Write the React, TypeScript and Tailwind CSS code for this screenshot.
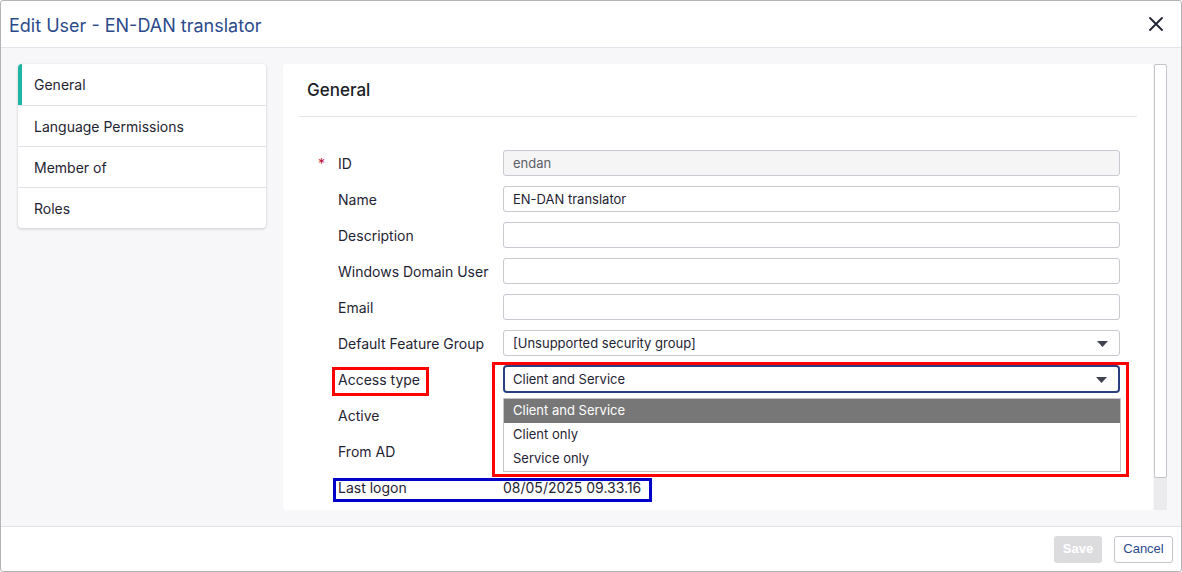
import React from "react";

const navItems = ["General", "Language Permissions", "Member of", "Roles"];

type Field = {
  label: string;
  required?: boolean;
  kind: "text" | "select" | "none" | "value";
  value?: string;
  disabled?: boolean;
  focused?: boolean;
};

const fields: Field[] = [
  { label: "ID", required: true, kind: "text", value: "endan", disabled: true },
  { label: "Name", kind: "text", value: "EN-DAN translator" },
  { label: "Description", kind: "text", value: "" },
  { label: "Windows Domain User", kind: "text", value: "" },
  { label: "Email", kind: "text", value: "" },
  { label: "Default Feature Group", kind: "select", value: "[Unsupported security group]" },
  { label: "Access type", kind: "select", value: "Client and Service", focused: true },
  { label: "Active", kind: "none" },
  { label: "From AD", kind: "none" },
  { label: "Last logon", kind: "value", value: "08/05/2025 09.33.16" },
];

function Caret() {
  return (
    <svg width="11" height="6" viewBox="0 0 11 6" className="shrink-0">
      <path d="M0 0 L11 0 L5.5 6 Z" fill="#3f4350" />
    </svg>
  );
}

function FieldInput({ f }: { f: Field }) {
  if (f.kind === "none") return null;
  if (f.kind === "value") {
    return <div className="text-[14px] text-[#1f2433]">{f.value}</div>;
  }
  if (f.kind === "select") {
    return (
      <div
        className={
          "w-[617px] flex items-center justify-between pt-[2px] pr-[11px] bg-white text-[13px] text-[#1f2433] " +
          (f.focused
            ? "h-[28px] border-2 border-[#2b3f80] pl-[8px] rounded-[4px]"
            : "h-[26px] border border-[#c9c9d1] pl-[9px] rounded-[3px]")
        }
      >
        <span>{f.value}</span>
        <Caret />
      </div>
    );
  }
  return (
    <div
      className={
        "w-[617px] h-[26px] flex items-center pt-[2px] pl-[9px] text-[13px] rounded-[3px] border border-[#c9c9d1] " +
        (f.disabled ? "bg-[#f5f5f6] text-[#5c5f66]" : "bg-white text-[#1f2433]")
      }
    >
      {f.value}
    </div>
  );
}

export default function App() {
  return (
    <div className="relative w-[1182px] h-[572px] bg-white border border-[#b3b3b8] rounded-[3px] flex flex-col font-['Inter',sans-serif] overflow-hidden">
      {/* header */}
      <div className="h-[47px] shrink-0 border-b border-[#e4e4ea] flex items-center justify-between pl-[8px] pr-[18px]">
        <h1 className="mt-[3px] text-[18px] text-[#2b4a8b] leading-none">Edit User - EN-DAN translator</h1>
        <svg width="14" height="14" viewBox="0 0 14 14">
          <path d="M1 1 L13 13 M13 1 L1 13" stroke="#1f2433" strokeWidth="1.8" strokeLinecap="round" />
        </svg>
      </div>

      {/* body */}
      <div className="h-[478px] shrink-0 bg-[#f7f7fa] flex pt-4 pl-[17px]">
        {/* side nav */}
        <div className="w-[248px] self-start bg-white rounded-[4px] shadow-[0_1px_3px_rgba(0,0,0,0.18)] overflow-hidden">
          {navItems.map((item, i) => (
            <div
              key={item}
              className={
                "h-[41px] flex items-center text-[14px] text-[#1f2433] " +
                (i > 0 ? "border-t border-[#e2e2e8] " : "") +
                (i === 0 ? "border-l-4 border-l-[#1db5a6] pl-3" : "pl-4")
              }
            >
              {item}
            </div>
          ))}
        </div>

        {/* content panel */}
        <div className="ml-[17px] w-[870px] h-[446px] bg-white rounded-[3px] px-4 overflow-hidden">
          <div className="h-[53px] flex items-center pl-2 pt-[2px] border-b border-[#e4e4ea]">
            <h2 className="text-[17px] font-medium text-[#1a1d26]">General</h2>
          </div>
          <div className="pt-[28px] pl-[17px] flex flex-col">
            {fields.map((f) => (
              <div key={f.label} className="h-[36px] flex items-center">
                <div className="w-[22px] pl-[2px] text-[14px] text-[#c0143c] shrink-0">
                  {f.required ? "*" : ""}
                </div>
                <div className="w-[165px] shrink-0 text-[14px] text-[#1f2433]">{f.label}</div>
                <FieldInput f={f} />
              </div>
            ))}
          </div>
        </div>

        {/* scrollbar */}
        <div className="ml-px w-[13px] h-[446px] bg-[#ebebee] flex flex-col">
          <div className="h-[414px] bg-white border border-[#c4c4ca] rounded-[2px]" />
        </div>
      </div>

      {/* footer */}
      <div className="flex-1 border-t border-[#e0e0e6] flex items-center justify-end gap-3 pr-[8px] font-['Liberation_Sans',sans-serif]">
        <div className="w-[48px] h-[27px] bg-[#dcdcdf] rounded-[3px] flex items-center justify-center text-[13px] font-bold text-white">
          Save
        </div>
        <div className="w-[59px] h-[27px] bg-white border border-[#c4c4cc] rounded-[3px] flex items-center justify-center text-[13px] text-[#2b4a8b]">
          Cancel
        </div>
      </div>

      {/* open dropdown list */}
      <div className="absolute left-[502px] top-[397px] w-[618px] bg-white border border-[#c4c4c8] flex flex-col text-[13px] text-[#1f2433]">
        <div className="h-[24px] flex items-center pl-[9px] bg-[#777777] text-white">Client and Service</div>
        <div className="h-[24px] flex items-center pl-[9px]">Client only</div>
        <div className="h-[24px] flex items-center pl-[9px]">Service only</div>
      </div>

      {/* annotation boxes */}
      <div className="absolute left-[491px] top-[361px] w-[637px] h-[115px] border-[3px] border-[#ff0000]" />
      <div className="absolute left-[331px] top-[366px] w-[97px] h-[29px] border-[3px] border-[#ff0000]" />
      <div className="absolute left-[332px] top-[477px] w-[319px] h-[24px] border-[3px] border-[#0000c8]" />
    </div>
  );
}
